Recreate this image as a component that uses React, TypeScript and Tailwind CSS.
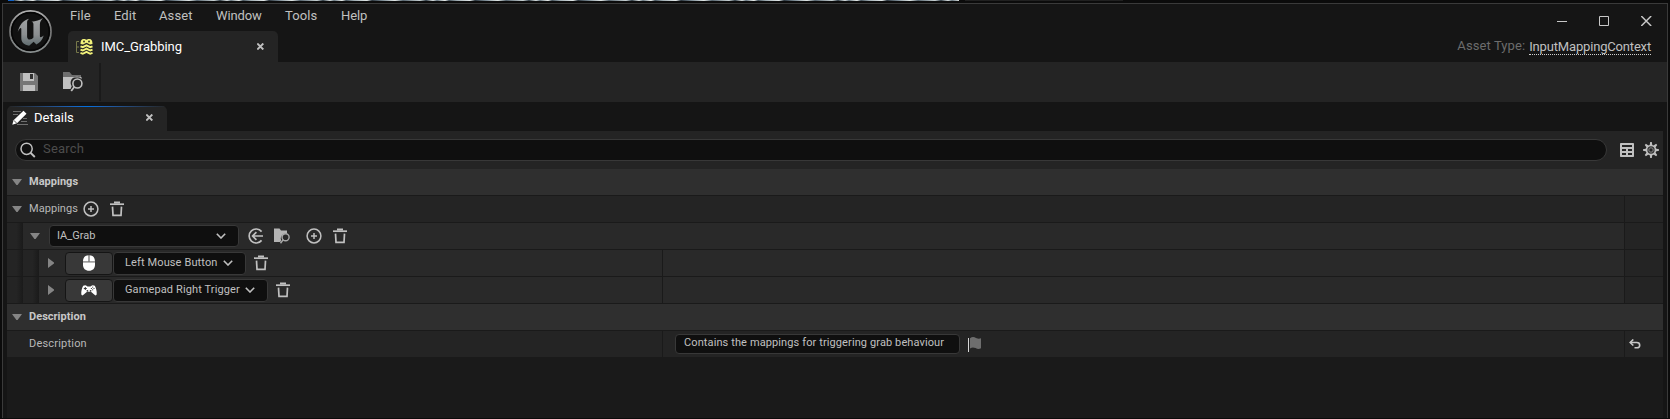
import React from "react";

type IconProps = { className?: string };

const Triangle = ({ open }: { open?: boolean }) => (
  <svg className="block h-[10px] w-[10px] shrink-0" viewBox="0 0 10 10" fill="#858585">
    {open ? <path d="M0 2h10L5.6 8h-1.2z" /> : <path d="M2 0v10l6-4.6v-.8z" />}
  </svg>
);

const Trash = ({ className = "" }: IconProps) => (
  <svg className={`block h-4 w-[14px] shrink-0 ${className}`} viewBox="0 0 14 16" fill="none" stroke="#c0c0c0">
    <path d="M0 3.200h14" strokeWidth="1.700" />
    <path d="M4 1.500h6" strokeWidth="2" />
    <path d="M2.500 5.600l.5 8.700h8l.5-8.700" strokeWidth="1.700" />
  </svg>
);

const PlusCircle = ({ className = "" }: IconProps) => (
  <svg className={`block h-4 w-4 shrink-0 ${className}`} viewBox="0 0 16 16" fill="none" stroke="#c0c0c0" strokeWidth="1.5">
    <circle cx="8" cy="8" r="6.9" />
    <path d="M8 5v6M5 8h6" />
  </svg>
);

const UseSelected = ({ className = "" }: IconProps) => (
  <svg className={`block h-4 w-4 shrink-0 ${className}`} viewBox="0 0 16 16" fill="none" stroke="#c0c0c0" strokeWidth="1.7">
    <path d="M13.6 3.6A7 7 0 1 0 13.6 12.4" />
    <path d="M4.4 8H15M8.4 4.2L4.6 8l3.8 3.8" />
  </svg>
);

const FolderSearch = ({ className = "" }: IconProps) => (
  <svg className={`block shrink-0 ${className}`} viewBox="0 0 20 20">
    <path d="M0 0h6.500l2.500 3H18v3H0z" fill="#6e6e6e" />
    <path d="M0 5h18.500v2.200a6 6 0 0 0-9.800 7L7.500 17H0z" fill="#c0c0c0" />
    <circle cx="14.400" cy="11.500" r="4.500" fill="none" stroke="#c0c0c0" strokeWidth="1.600" />
    <path d="M11.400 14.700l-3.200 4.300" stroke="#c0c0c0" strokeWidth="1.800" />
  </svg>
);

const BrowseSmall = ({ className = "" }: IconProps) => (
  <svg className={`block h-4 w-4 shrink-0 ${className}`} viewBox="0 0 16 16">
    <path d="M0 .5h5.500l1.500 2h6v3.200a5 5 0 0 0-5.800 6.800L6.200 14H0z" fill="#b4b4b4" />
    <circle cx="11.600" cy="9.200" r="3.500" fill="none" stroke="#a8a8a8" strokeWidth="1.400" />
    <path d="M9.200 11.600L6.500 15.300" stroke="#a8a8a8" strokeWidth="1.500" />
  </svg>
);

const Chevron = ({ className = "" }: IconProps) => (
  <svg className={`block h-[6px] w-[10px] shrink-0 ${className}`} viewBox="0 0 10 6" fill="none" stroke="#c0c0c0" strokeWidth="1.6">
    <path d="M.8.8L5 5 9.200.8" />
  </svg>
);

const Close = ({ className = "" }: IconProps) => (
  <svg className={`block h-[7px] w-[7px] shrink-0 ${className}`} viewBox="0 0 7 7" stroke="#c0c0c0" strokeWidth="1.9">
    <path d="M.3.5l6 6M6.300.5l-6 6" />
  </svg>
);

const UnrealLogo = () => (
  <svg className="block h-[43px] w-[43px] shrink-0" viewBox="0 0 44 44">
    <defs>
      <linearGradient id="ring" x1="0" y1="0" x2="0" y2="1">
        <stop offset="0" stopColor="#b0b0b0" />
        <stop offset="0.5" stopColor="#737373" />
        <stop offset="1" stopColor="#8a9090" />
      </linearGradient>
      <linearGradient id="letter" x1="0" y1="0" x2="0" y2="1">
        <stop offset="0" stopColor="#a2a4a5" />
        <stop offset="0.600" stopColor="#8b8e90" />
        <stop offset="1" stopColor="#5f6c6f" />
      </linearGradient>
    </defs>
    <circle cx="22" cy="22" r="21" fill="#111" stroke="url(#ring)" strokeWidth="1.800" />
    <circle cx="22" cy="22" r="19.200" fill="none" stroke="#050505" strokeWidth="1.500" />
    <path
      d="M9 22.500C10.500 15.500 14.500 10.500 20.500 9C19 10.200 18.500 11.500 18.500 13V27C18.500 28.900 19.600 30.200 21.200 30.200C22.700 30.200 24.200 29.300 25 28.200V14.500C25 13.100 24.300 12.200 23 11.900C27.500 11.500 31.500 10.300 34.700 8.200C33 10.300 31.600 12 31.600 14.500V26.900C31.600 28.200 33 28.300 35.500 26.200C34 31 31.500 33.700 28 35.400L25.200 32.400L20.600 36.500C15.400 35.600 12.600 33 12.600 28.800V19.500C12.600 17.500 10.700 18.500 9 22.500Z"
      fill="url(#letter)"
    />
  </svg>
);

const MappingContext = () => (
  <svg className="block h-4 w-[17px] shrink-0" viewBox="0 0 17 16" fill="none">
    <path d="M3 2.500H.5v11H3M.5 8H3" stroke="#77784a" />
    <path d="M4.500 5C4.500 1.800 5.500 0 7.700 0c1.400 0 1.900.7 2.800.7S11.900 0 13.300 0c2.200 0 3.200 1.800 3.200 5L14 5.600 10.500 3.800 7 5.600z" fill="#f3f37b" />
    <circle cx="8" cy="2.500" r="1" fill="#3c3c28" />
    <circle cx="13" cy="2.500" r="1" fill="#3c3c28" />
    <path d="M4.500 7.300l2.300.9 3.700-1.900 3.700 1.900 2.300-.9M4.500 10.600l2.300.9 3.700-1.900 3.700 1.900 2.300-.9M4.500 13.900l2.300.9 3.700-1.900 3.700 1.900 2.300-.9" stroke="#f3f37b" strokeWidth="1.900" />
  </svg>
);

const Save = () => (
  <svg className="block h-[18px] w-[18px] shrink-0" viewBox="0 0 18 18">
    <path d="M0 0h15l3 3v15H0z" fill="#777" />
    <path d="M3 0h11v8H3zM3 12h12v6H3z" fill="#c0c0c0" />
    <path d="M10 1h3v5h-3z" fill="#303030" />
  </svg>
);

const DetailsIcon = () => (
  <svg className="block h-4 w-4 shrink-0" viewBox="0 0 16 16">
    <path d="M1 1.500h8M1 4.500h5M11 8.500h4M9 11.500h6M5 14.500h11" stroke="#6f6f6f" />
    <path d="M.3 14.700l1.200-4.500L11.500.8l3 3L5 13.300z" fill="#fff" />
    <path d="M1.800 10.300L5 13.500" stroke="#242424" strokeWidth=".8" />
  </svg>
);

const SearchIcon = () => (
  <svg className="block h-4 w-4 shrink-0" viewBox="0 0 16 16" fill="none" stroke="#c0c0c0">
    <circle cx="6.600" cy="6.800" r="5.600" strokeWidth="1.500" />
    <path d="M10.500 10.800l4.300 4.200" strokeWidth="1.900" />
  </svg>
);

const TableIcon = () => (
  <svg className="block h-[14px] w-[14px] shrink-0" viewBox="0 0 14 14">
    <rect width="14" height="14" rx=".8" fill="#c0c0c0" />
    <path d="M2 2h10v2H2zM2 6h4v2H2zM8 6h4v2H8zM2 10h4v2H2zM8 10h4v2H8z" fill="#242424" />
  </svg>
);

const teeth = [0, 45, 90, 135, 180, 225, 270, 315];
const Gear = () => (
  <svg className="block h-4 w-4 shrink-0" viewBox="0 0 16 16">
    {teeth.map((a) => (
      <path key={a} d="M6.600 3.500L7.200 0h1.600l.6 3.500z" fill="#c0c0c0" transform={`rotate(${a} 8 8)`} />
    ))}
    <circle cx="8" cy="8" r="4.500" fill="#333" stroke="#c0c0c0" strokeWidth="1.700" />
    <circle cx="8" cy="8" r="2.200" fill="#242424" stroke="#888" strokeWidth="1" />
  </svg>
);

const Mouse = () => (
  <svg className="block h-[16px] w-[12px]" viewBox="0 0 13 17">
    <path d="M6 0v7H0C0 2.500 2 .4 6 0zM7 0v7h6C13 2.500 11 .4 7 0z" fill="#fff" />
    <path d="M0 7h13v1H0z" fill="#aaa" />
    <path d="M0 8h13v2.500C13 14.500 10.500 17 6.500 17S0 14.500 0 10.500z" fill="#fff" />
  </svg>
);

const Gamepad = () => (
  <svg className="mt-px block h-[11px] w-[16px]" viewBox="0 0 16 11">
    <path d="M2.200.8C3.500 0 5 0 5.800.9l.7.7h3l.7-.7c.8-.9 2.300-.9 3.600-.1C15 3 16 6.500 15.700 9c-.2 1.800-1.600 1.800-2.500.6L10.600 7.200 9.500 6.800h-3l-1.100.4L2.800 9.600C1.900 10.800.5 10.800.3 9 0 6.500 1 3 2.200.8z" fill="#fff" />
    <path d="M4.300 2v3M2.800 3.500h3" stroke="#383838" />
    <path d="M11.700 1.700v1M11.700 4.300v1M9.900 3.500h1M12.500 3.500h1" stroke="#383838" />
    <circle cx="6.400" cy="5.800" r=".9" fill="#383838" />
    <circle cx="9.600" cy="5.800" r=".9" fill="#383838" />
  </svg>
);

const Flag = () => (
  <svg className="block h-[15px] w-[14px] shrink-0" viewBox="0 0 14 15">
    <path d="M.5 1v14" stroke="#d8d8d8" />
    <path d="M2 1.200C4-.3 6-.2 8 1c2 1 3.500 1 5 .3v10c-2 1-3.500.8-5.500-.2s-3.500-1-5.500.4z" fill="#6e6e6e" />
  </svg>
);

const Reset = () => (
  <svg className="block h-[10px] w-[12px]" viewBox="0 0 12 10" fill="none" stroke="#c8c8c8" strokeWidth="1.600">
    <path d="M1.500 3.500h6.200c4 0 4 5.300 0 5.300H5.500" />
    <path d="M4.300.5L1.200 3.500l3.100 3" />
  </svg>
);

const Indent = () => (
  <div className="h-[26px] w-4 shrink-0 bg-linear-to-r from-[#242424] from-60% to-[#1a1a1a]" />
);

function Row({ depth = 0, split = false, right, children, value }: {
  depth?: number;
  split?: boolean;
  right?: React.ReactNode;
  children: React.ReactNode;
  value?: React.ReactNode;
}) {
  const bg = depth > 0 ? "bg-[#292929]" : "bg-[#242424]";
  return (
    <div className={`flex h-[27px] border-b border-[#1a1a1a] ${bg}`}>
      <div className={`flex items-center ${split ? "w-[655px]" : "w-[1617px]"}`}>
        {Array.from({ length: depth }, (_, i) => <Indent key={i} />)}
        {children}
      </div>
      {split && <div className="flex w-[962px] items-center border-l border-[#1a1a1a]">{value}</div>}
      <div className="flex grow items-center border-l border-[#1a1a1a] bg-[#242424] pl-1">{right}</div>
    </div>
  );
}

const Category = ({ title }: { title: string }) => (
  <div className="flex h-[27px] items-center border-b border-[#1a1a1a] bg-[#2f2f2f] pl-[5px]">
    <Triangle open />
    <span className="ml-[7px] font-bold tracking-[0.02px] text-[#c8c8c8]">{title}</span>
  </div>
);

function KeyRow({ icon, label, width, labelWidth }: {
  icon: React.ReactNode;
  label: string;
  width: string;
  labelWidth: string;
}) {
  return (
    <Row depth={2} split>
      <div className="ml-[7px]"><Triangle /></div>
      <div className="ml-[9px] flex h-[23px] w-[48px] items-center justify-center rounded-[4px] border border-[#151515] bg-[#383838]">{icon}</div>
      <div className={`flex h-[23px] items-center rounded-[4px] border border-[#383838] bg-[#0f0f0f] pl-[11px] ${width}`}>
        <span className={`whitespace-nowrap text-[#c0c0c0] ${labelWidth}`}>{label}</span>
        <Chevron />
      </div>
      <Trash className="ml-2" />
    </Row>
  );
}

export default function App() {
  return (
    <div className="flex h-[419px] w-[1670px] flex-col overflow-hidden bg-[#0b0b0b] font-[Roboto,sans-serif] text-[11px] leading-[14px] tracking-[0.12px]">
      <div className="flex h-[3px] shrink-0">
        <div className="h-px w-2" />
        <div className="h-px w-[6px] bg-[#1464c8]" />
        <div className="h-px w-[945px] bg-[repeating-linear-gradient(90deg,#333f48_0px,#d5dcdc_7px,#64737d_11px,#e8ecea_19px,#45525b_23px,#9daab0_31px,#e0e6e6_44px,#2c363e_49px,#7e8d97_60px,#dfe5e4_72px,#55636d_80px,#c6cfd1_97px,#333f48_103px)]" />
        <div className="ml-[6px] h-px w-[158px] bg-[#202020]" />
      </div>
      <div className="mr-[2px] ml-[2px] flex h-[415px] flex-col border-x border-t border-[#3a3a3a] bg-[#151515]">
        <header className="flex h-[58px] shrink-0">
          <div className="pt-[6px] pl-[6px]"><UnrealLogo /></div>
          <div className="ml-[16px] flex flex-col justify-between">
            <nav className="flex h-[23px] items-center pl-[2px] text-[13px] tracking-[0.1px] text-[#c0c0c0]">
              <span className="w-[44px]">File</span>
              <span className="w-[45px]">Edit</span>
              <span className="w-[57px]">Asset</span>
              <span className="w-[69px] tracking-[-0.1px]">Window</span>
              <span className="w-[56px]">Tools</span>
              <span className="tracking-[-0.1px]">Help</span>
            </nav>
            <div className="flex h-[31px] w-[210px] items-center rounded-t-[5px] bg-[#242424] pl-2">
              <MappingContext />
              <span className="ml-2 w-[156px] text-[13px] tracking-[-0.05px] text-white">IMC_Grabbing</span>
              <Close />
            </div>
          </div>
          <div className="ml-auto flex flex-col items-end pr-4">
            <div className="-mr-px flex h-[34px] items-center gap-8">
              <svg className="h-[10px] w-[10px]" viewBox="0 0 10 10"><path d="M0 5.500h10" stroke="#c8c8c8" /></svg>
              <svg className="h-[10px] w-[10px]" viewBox="0 0 10 10" fill="none"><path d="M.5.5h9v9h-9z" stroke="#c8c8c8" /></svg>
              <svg className="h-[10px] w-[11px]" viewBox="0 0 11 10"><path d="M.2 0l10 10M10.200 0l-10 10" stroke="#c8c8c8" strokeWidth="1.500" /></svg>
            </div>
            <div className="flex pt-px text-[13px] text-[#6c6c6c]">
              <span className="tracking-[0.1px]">Asset Type:</span>
              <span className="ml-1 h-[16px] border-b border-dotted border-[#d0d0d0] pt-px tracking-[-0.17px] text-[#c0c0c0]">InputMappingContext</span>
            </div>
          </div>
        </header>
        <div className="flex h-10 shrink-0 items-center bg-[#242424] pl-[17px]">
          <Save />
          <FolderSearch className="ml-[25px] h-5 w-5" />
          <div className="ml-4 h-[38px] w-[2px] bg-[#1a1a1a]" />
        </div>
        <div className="flex h-[29px] shrink-0 items-end pl-1">
          <div className="h-[25px] w-[160px] overflow-hidden rounded-t-[5px] bg-[#242424]">
            <div className="h-px bg-linear-to-r from-[#242424] via-[#0070e0] to-[#242424]" />
            <div className="flex h-[22px] items-center pl-[5px]">
              <DetailsIcon />
              <span className="ml-[6px] w-[112px] text-[13px] tracking-normal text-white">Details</span>
              <Close className="mb-px" />
            </div>
          </div>
        </div>
        <main className="mr-1 ml-1 flex grow flex-col bg-[#1a1a1a]">
          <div className="flex h-[38px] shrink-0 items-center bg-[#242424] pr-1 pl-2">
            <div className="flex h-[22px] w-[1592px] items-center rounded-full border border-[#383838] bg-[#0f0f0f] pl-[4px]">
              <SearchIcon />
              <span className="ml-[7px] pb-[2px] text-[13px] tracking-[0.2px] text-[#4c4c4c]">Search</span>
            </div>
            <div className="ml-auto flex items-center gap-[9px]">
              <TableIcon />
              <Gear />
            </div>
          </div>
          <Category title="Mappings" />
          <Row>
            <div className="ml-[5px]"><Triangle open /></div>
            <span className="ml-[7px] w-[54px] tracking-[0.05px] text-[#b8b8b8]">Mappings</span>
            <PlusCircle />
            <Trash className="ml-[11px]" />
          </Row>
          <Row depth={1}>
            <div className="ml-[7px]"><Triangle open /></div>
            <div className="ml-[9px] flex h-[22px] w-[190px] items-center justify-between rounded-[4px] border border-[#383838] bg-[#0f0f0f] pr-3 pl-[7px]">
              <span className="tracking-normal text-[#c0c0c0]">IA_Grab</span>
              <Chevron />
            </div>
            <UseSelected className="ml-[9px]" />
            <BrowseSmall className="ml-[10px]" />
            <PlusCircle className="ml-[16px]" />
            <Trash className="ml-[11px]" />
          </Row>
          <KeyRow icon={<Mouse />} label="Left Mouse Button" width="w-[133px]" labelWidth="w-[98px]" />
          <KeyRow icon={<Gamepad />} label="Gamepad Right Trigger" width="w-[155px]" labelWidth="w-[120px]" />
          <Category title="Description" />
          <Row
            split
            right={<Reset />}
            value={
              <>
                <div className="ml-3 flex h-5 w-[285px] items-center rounded-[4px] border border-[#383838] bg-[#0f0f0f] pb-[2px] pl-2 tracking-[0.11px] text-[#c0c0c0]">
                  Contains the mappings for triggering grab behaviour
                </div>
                <div className="ml-2"><Flag /></div>
              </>
            }
          >
            <span className="ml-[22px] tracking-[0.2px] text-[#b8b8b8]">Description</span>
          </Row>
        </main>
      </div>
    </div>
  );
}
